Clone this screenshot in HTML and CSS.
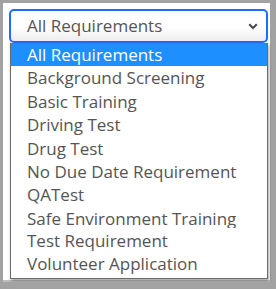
FILE: index.html
```html
<!DOCTYPE html>
<html lang="en">
<head>
    <meta charset="UTF-8">
    <title>Requirements</title>
    <link rel="stylesheet" href="styles.css">
</head>
<body>
    <div class="panel">
        <div class="select">
            <span class="select-value">All Requirements</span>
            <svg class="chevron" width="10" height="7" viewBox="0 0 10 7">
                <path d="M1.2 1.2 L5 5 L8.8 1.2" fill="none" stroke="#4a4a4a" stroke-width="2"/>
            </svg>
        </div>
        <ul class="options">
            <li class="option selected">All Requirements</li>
            <li class="option">Background Screening</li>
            <li class="option">Basic Training</li>
            <li class="option">Driving Test</li>
            <li class="option">Drug Test</li>
            <li class="option">No Due Date Requirement</li>
            <li class="option">QATest</li>
            <li class="option short">Safe Environment Training</li>
            <li class="option">Test Requirement</li>
            <li class="option">Volunteer Application</li>
        </ul>
    </div>
</body>
</html>
```

FILE: styles.css
```css
body {
    margin: 0;
    padding: 3px 6px 0 3px;
    background: #a2a2a2;
    font-family: 'Open Sans', sans-serif;
    font-size: 17px;
    color: #555;
}

.panel {
    background: #fff;
    padding: 6px 2px 0 6px;
    height: 279px;
    box-sizing: border-box;
    border-bottom: 2px solid #bdbdbd;
}

.select {
    display: flex;
    align-items: center;
    justify-content: space-between;
    height: 34px;
    box-sizing: border-box;
    border: 2px solid #1a6dff;
    border-radius: 5px;
    padding: 0 8px 0 16px;
    background: linear-gradient(#fff 55%, #ececec);
}

.select-value {
    line-height: 23.4px;
}

.chevron {
    display: block;
}

.options {
    list-style: none;
    margin: 0 0 0 1px;
    padding: 0 0 2px 0;
    border: 1px solid #6a6a6a;
    border-top: none;
    background: #fff;
    box-shadow: 1px 2px 3px rgba(0, 0, 0, 0.35);
}

.option {
    height: 23.4px;
    line-height: 23.4px;
    padding-left: 16px;
    white-space: nowrap;
    overflow: hidden;
}

.option.selected {
    background: #1e8fff;
    color: #fff;
}

.option.short {
    height: 21px;
}

.option.short + .option {
    padding-top: 1px;
}
```
